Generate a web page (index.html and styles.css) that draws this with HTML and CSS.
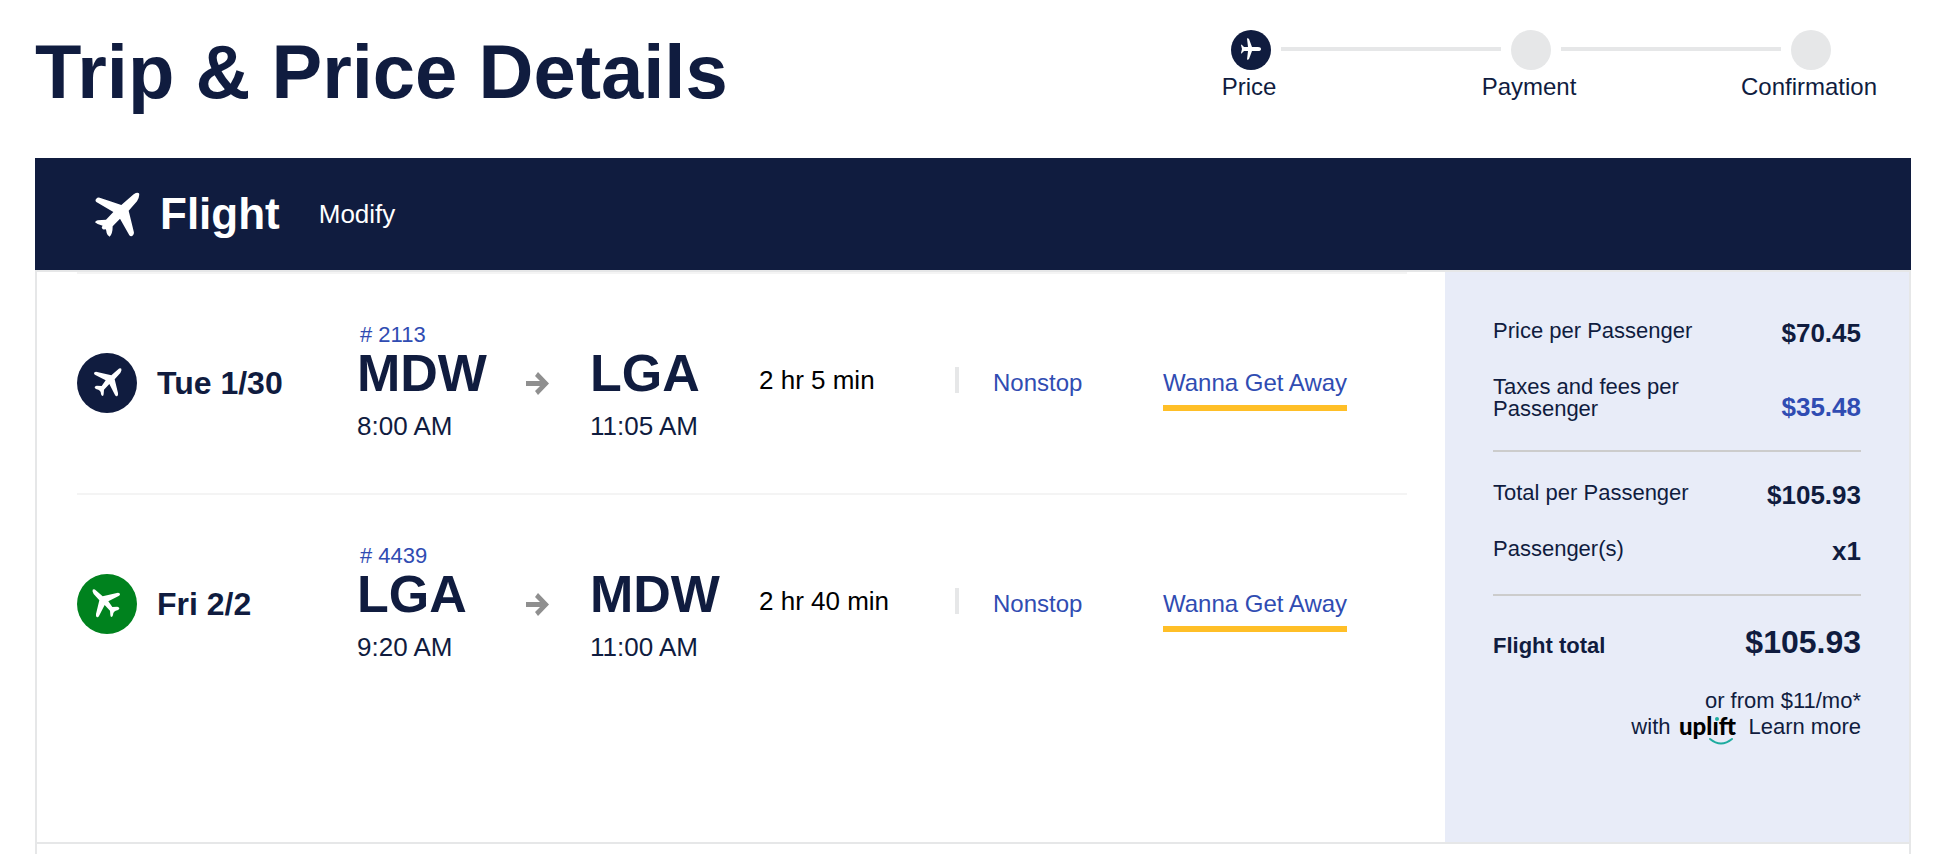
FILE: index.html
```html
<!DOCTYPE html>
<html lang="en">
<head>
<meta charset="utf-8">
<meta name="viewport" content="width=device-width, initial-scale=1">
<title>Trip &amp; Price Details</title>
<link rel="stylesheet" href="styles.css">
</head>
<body>
<svg class="sprite" aria-hidden="true">
  <symbol id="plane" viewBox="0 0 180 180">
    <path d="M133 47Q129 44 122 50L103 67Q80 61 57 56Q51 56 51 61Q51 64 55 66L86 82L74 99L59 98Q52 100 53 104Q55 108 64 110Q69 112 71 117Q72 128 76 129Q80 129 80 123L81 110L97 93L114 126Q117 131 121 129Q124 127 123 120L113 79L130 60Q135 51 133 47Z"/>
  </symbol>
  <symbol id="arrow" viewBox="0 0 23 23">
    <path d="M0 9h14L9 4l3-4 11 11.500L12 23l-3-4 5-5H0z"/>
  </symbol>
</svg>
<header class="header">
  <h1 class="title">Trip &amp; Price Details</h1>
  <ol class="stepper">
    <li class="step step-current" aria-current="step">
      <span class="dot"><svg viewBox="0 0 40 40" aria-hidden="true"><path d="M30 19q0-2-3-2h-6L18 9q-1-1-2-.500l1 8.500h-4l-2-2q-1-1-1 0l1 4-1 4q0 1 1 0l2-2h4l-1 8.500q1 .500 2-.500l3-8h6q3 0 3-2z"/></svg></span>
      <span class="step-label">Price</span>
    </li>
    <li class="connector" aria-hidden="true"></li>
    <li class="step"><span class="dot"></span><span class="step-label">Payment</span></li>
    <li class="connector" aria-hidden="true"></li>
    <li class="step"><span class="dot"></span><span class="step-label">Confirmation</span></li>
  </ol>
</header>
<main class="main">
  <section class="banner">
    <svg class="banner-icon" viewBox="0 0 135 135" aria-hidden="true"><path d="M132 4Q127 0 116 7L79 39Q45 27 14 17Q7 16 4 20Q-1 24 4 30L55 60L33 83L8 85Q2 87 0 91Q8 99 23 101Q19 105 21 109Q25 115 31 111Q34 112 35 123Q37 131 44 134Q53 126 53 103L75 80L103 130Q109 137 115 128Q118 124 116 118L101 56L126 28Q135 11 132 4Z"/></svg>
    <h2 class="banner-title">Flight</h2>
    <a class="modify" href="#">Modify</a>
  </section>
  <section class="details">
    <div class="flights">
      <article class="flight">
        <div class="when"><span class="badge"><svg aria-hidden="true"><use href="#plane"/></svg></span><span>Tue 1/30</span></div>
        <div class="station">
          <a class="number" href="#"># 2113</a>
          <span class="code">MDW</span>
          <span class="time">8:00 AM</span>
        </div>
        <svg class="arrow" aria-hidden="true"><use href="#arrow"/></svg>
        <div class="station arrival">
          <span class="code">LGA</span>
          <span class="time">11:05 AM</span>
        </div>
        <div class="duration">2 hr 5 min</div>
        <a class="stops" href="#">Nonstop</a>
        <a class="fare" href="#">Wanna Get Away</a>
      </article>
      <article class="flight">
        <div class="when"><span class="badge badge-return"><svg aria-hidden="true"><use href="#plane"/></svg></span><span>Fri 2/2</span></div>
        <div class="station">
          <a class="number" href="#"># 4439</a>
          <span class="code">LGA</span>
          <span class="time">9:20 AM</span>
        </div>
        <svg class="arrow" aria-hidden="true"><use href="#arrow"/></svg>
        <div class="station arrival">
          <span class="code">MDW</span>
          <span class="time">11:00 AM</span>
        </div>
        <div class="duration">2 hr 40 min</div>
        <a class="stops" href="#">Nonstop</a>
        <a class="fare" href="#">Wanna Get Away</a>
      </article>
    </div>
    <aside class="summary">
      <dl class="group">
        <div class="line"><dt>Price per Passenger</dt><dd>$70.45</dd></div>
        <div class="line"><dt>Taxes and fees per Passenger</dt><dd><a href="#">$35.48</a></dd></div>
      </dl>
      <dl class="group">
        <div class="line"><dt>Total per Passenger</dt><dd>$105.93</dd></div>
        <div class="line"><dt>Passenger(s)</dt><dd>x1</dd></div>
      </dl>
      <dl class="group total">
        <div class="line"><dt>Flight total</dt><dd>$105.93</dd></div>
      </dl>
      <p class="financing">
        <span>or from $11/mo*</span>
        <span class="partner">with
          <svg class="uplift" viewBox="0 0 62 34" role="img" aria-label="uplift">
            <text x="0" y="21">upl&#305;ft</text>
            <circle cx="38" cy="5" r="2"/>
            <path d="M31 25q11 9 22 0"/>
          </svg>
          <a href="#">Learn more</a></span>
      </p>
    </aside>
  </section>
  <section class="next"></section>
</main>
</body>
</html>
```
FILE: styles.css
```css
* {
  box-sizing: border-box;
}

body {
  margin: 0;
  min-height: 100vh;
  display: flex;
  flex-direction: column;
  background: #fff;
  color: #101c3f;
  font-family: "Liberation Sans", Arial, sans-serif;
}

h1, h2, p, ol, dl, dd {
  margin: 0;
  padding: 0;
}

a {
  color: #304cb2;
  text-decoration: none;
}

.sprite {
  display: none;
}

.header {
  display: flex;
  justify-content: space-between;
  align-items: flex-start;
  padding: 26px 37px 40px 35px;
}

.title {
  font-size: 76px;
  line-height: 92px;
}

.stepper {
  display: flex;
  width: 600px;
  margin: 4px 80px 0 0;
  list-style: none;
}

.step {
  flex: 0 0 40px;
  min-width: 0;
  display: flex;
  flex-direction: column;
  align-items: center;
  gap: 3px;
}

.dot {
  width: 40px;
  height: 40px;
  border-radius: 50%;
  background: #e6e7e8;
}

.dot svg {
  display: block;
  fill: #fff;
}

.step-current .dot {
  background: #101c3f;
}

.step-label {
  padding-right: 4px;
  font-size: 24px;
  line-height: 28px;
  white-space: nowrap;
}

.connector {
  flex: 1;
  height: 4px;
  margin: 17px 10px 0;
  background: #e6e7e8;
}

.main {
  flex: 1;
  display: flex;
  flex-direction: column;
  padding: 0 37px 0 35px;
}

.banner {
  display: flex;
  align-items: center;
  padding-left: 60px;
  background: #101c3f;
  color: #fff;
}

.banner-icon {
  width: 45px;
  height: 45px;
  fill: #fff;
}

.banner-title {
  margin: 0 39px 0 20px;
  font-size: 44px;
  line-height: 112px;
}

.modify {
  color: #fff;
  font-size: 26px;
}

.details {
  display: grid;
  grid-template-columns: minmax(0, 1fr) 464px;
  border: 2px solid #e6e7e8;
}

.flights {
  padding: 0 38px 0 40px;
}

.flight {
  display: grid;
  grid-template-columns: 280fr 169fr 64fr 169fr 234fr 170fr 244fr;
  align-items: center;
  border-top: 2px solid #f4f4f4;
  padding: 48px 0 49px;
}

.when {
  display: flex;
  align-items: center;
  gap: 20px;
  font-size: 32px;
  font-weight: bold;
}

.badge {
  width: 60px;
  height: 60px;
  border-radius: 50%;
  background: #101c3f;
}

.badge svg {
  display: block;
  width: 60px;
  height: 60px;
  fill: #fff;
}

.badge-return {
  background: #00821e;
}

.badge-return svg {
  transform: scaleX(-1);
}

.station {
  display: flex;
  flex-direction: column;
}

.arrival {
  padding-top: 26px;
}

.number {
  padding-left: 3px;
  font-size: 22px;
  line-height: 26px;
}

.code {
  font-size: 52px;
  font-weight: bold;
  line-height: 50px;
}

.time {
  margin-top: 10px;
  font-size: 26px;
  line-height: 36px;
}

.arrow {
  width: 23px;
  height: 23px;
  fill: #8f8f8f;
}

.duration {
  margin: 0 34px 6px 0;
  border-right: 4px solid #e6e7e8;
  color: #000;
  font-size: 26px;
  line-height: 26px;
}

.stops,
.fare {
  font-size: 24px;
  line-height: 30px;
}

.fare {
  justify-self: start;
  margin-top: 13px;
  padding-bottom: 7px;
  border-bottom: 6px solid #ffbf27;
}

.summary {
  padding: 46px 48px 102px;
  background: #e8ecf8;
}

.group {
  display: flex;
  flex-direction: column;
  gap: 26px;
  padding-bottom: 28px;
}

.group + .group {
  padding-top: 28px;
  border-top: 2px solid #ccc;
}

.line {
  display: flex;
  justify-content: space-between;
}

.line dt {
  max-width: 220px;
  padding: 2px 0;
  font-size: 22px;
  line-height: 22px;
}

.line dd {
  align-self: flex-end;
  font-size: 26px;
  font-weight: bold;
  line-height: 30px;
}

.total .line {
  align-items: baseline;
}

.total dt {
  font-weight: bold;
}

.total dd {
  align-self: baseline;
  font-size: 32px;
  line-height: 36px;
}

.financing {
  display: flex;
  flex-direction: column;
  align-items: flex-end;
  font-size: 22px;
  line-height: 26px;
}

.partner {
  display: flex;
  height: 26px;
}

.partner a {
  color: inherit;
}

.uplift {
  width: 62px;
  height: 34px;
  margin: 0 7px 0 9px;
  overflow: visible;
}

.uplift text {
  font-family: Lato, sans-serif;
  font-size: 24px;
  font-weight: 900;
  fill: #000;
}

.uplift circle {
  fill: #1dab9f;
}

.uplift path {
  fill: none;
  stroke: #1dab9f;
  stroke-width: 2;
  stroke-linecap: round;
}

.next {
  flex: 1;
  min-height: 10px;
  border: solid #e6e7e8;
  border-width: 0 2px;
}
```
